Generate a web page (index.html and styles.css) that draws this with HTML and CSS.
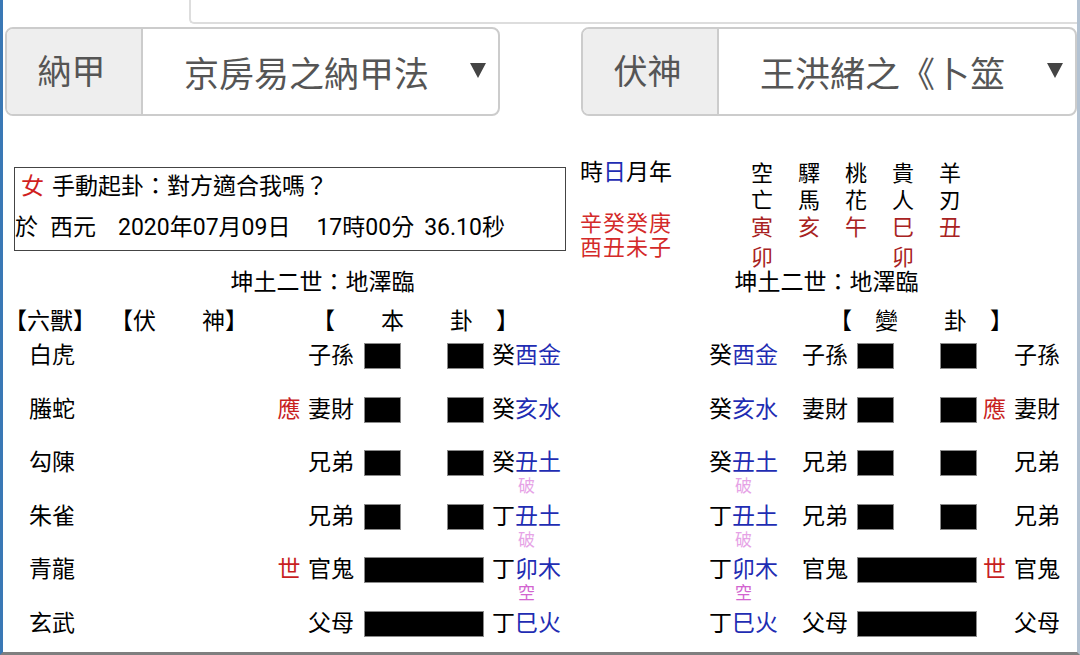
FILE: index.html
```html
<!DOCTYPE html>
<html lang="zh-Hant">
<head>
  <meta charset="UTF-8" />
  <meta name="viewport" content="width=device-width, initial-scale=1.0"/>
  <title>排卦</title>
  <link rel="stylesheet" href="styles.css">
</head>
<body>
<div class="frame">

  <div class="tabs">
    <div class="tab-blank"></div>
    <div class="tab-field"></div>
  </div>

  <div class="selects">
    <div class="pick">
      <div class="pick-label">納甲</div>
      <div class="pick-value">京房易之納甲法</div>
      <div class="pick-arrow"></div>
    </div>
    <div class="pick pick-wide">
      <div class="pick-label">伏神</div>
      <div class="pick-value">王洪緒之《卜筮</div>
      <div class="pick-arrow"></div>
    </div>
  </div>

  <div class="head">
    <div class="info">
      <div class="info-line1"><span class="sex">女</span>手動起卦：對方適合我嗎？</div>
      <div class="info-line2"><span>於</span><span class="gap-a">西元</span><span class="gap-b">2020年07月09日</span><span class="gap-c">17時00分</span><span class="gap-d">36.10秒</span></div>
    </div>

    <div class="ganzhi">
      <div class="gz-title">時<span class="blue">日</span>月年</div>
      <div class="gz-red gz-gan">辛癸癸庚</div>
      <div class="gz-red">酉丑未子</div>
    </div>

    <div class="shensha">
      <div>空</div><div>驛</div><div>桃</div><div>貴</div><div>羊</div>
      <div>亡</div><div>馬</div><div>花</div><div>人</div><div>刃</div>
      <div class="dark">寅</div><div class="dark">亥</div><div class="dark">午</div><div class="dark">巳</div><div class="dark">丑</div>
      <div class="dark low">卯</div><div></div><div></div><div class="dark low">卯</div><div></div>
    </div>
  </div>

  <div class="titles">
    <div class="title-left">坤土二世：地澤臨</div>
    <div class="title-right">坤土二世：地澤臨</div>
  </div>

  <div class="gua-head">
    <span class="gh-beast">【六獸】</span>
    <span class="gh-fu">【伏　　神】</span>
    <span class="gh-ben">【　　本　　卦　】</span>
    <span class="gh-bian">【　變　　卦　】</span>
  </div>

  <div class="gua">
    <div class="yao">
      <div class="beast">白虎</div>
      <div class="mark"></div>
      <div class="rel">子孫</div>
      <div><div class="bar yin"><i></i><i></i></div></div>
      <div class="najia">癸<span class="blue">酉金</span></div>
      <div class="najia2">癸<span class="blue">酉金</span></div>
      <div class="rel2">子孫</div>
      <div><div class="bar yin"><i></i><i></i></div></div>
      <div class="mark"></div>
      <div class="rel3">子孫</div>
    </div>

    <div class="yao">
      <div class="beast">螣蛇</div>
      <div class="mark">應</div>
      <div class="rel">妻財</div>
      <div><div class="bar yin"><i></i><i></i></div></div>
      <div class="najia">癸<span class="blue">亥水</span></div>
      <div class="najia2">癸<span class="blue">亥水</span></div>
      <div class="rel2">妻財</div>
      <div><div class="bar yin"><i></i><i></i></div></div>
      <div class="mark">應</div>
      <div class="rel3">妻財</div>
    </div>

    <div class="yao">
      <div class="beast">勾陳</div>
      <div class="mark"></div>
      <div class="rel">兄弟</div>
      <div><div class="bar yin"><i></i><i></i></div></div>
      <div class="najia">
        <div>癸<span class="blue">丑土</span></div>
        <div class="note po">破</div>
      </div>
      <div class="najia2">
        <div>癸<span class="blue">丑土</span></div>
        <div class="note po">破</div>
      </div>
      <div class="rel2">兄弟</div>
      <div><div class="bar yin"><i></i><i></i></div></div>
      <div class="mark"></div>
      <div class="rel3">兄弟</div>
    </div>

    <div class="yao">
      <div class="beast">朱雀</div>
      <div class="mark"></div>
      <div class="rel">兄弟</div>
      <div><div class="bar yin"><i></i><i></i></div></div>
      <div class="najia">
        <div>丁<span class="blue">丑土</span></div>
        <div class="note po">破</div>
      </div>
      <div class="najia2">
        <div>丁<span class="blue">丑土</span></div>
        <div class="note po">破</div>
      </div>
      <div class="rel2">兄弟</div>
      <div><div class="bar yin"><i></i><i></i></div></div>
      <div class="mark"></div>
      <div class="rel3">兄弟</div>
    </div>

    <div class="yao">
      <div class="beast">青龍</div>
      <div class="mark">世</div>
      <div class="rel">官鬼</div>
      <div><div class="bar yang"><i></i></div></div>
      <div class="najia">
        <div>丁<span class="blue">卯木</span></div>
        <div class="note kong">空</div>
      </div>
      <div class="najia2">
        <div>丁<span class="blue">卯木</span></div>
        <div class="note kong">空</div>
      </div>
      <div class="rel2">官鬼</div>
      <div><div class="bar yang"><i></i></div></div>
      <div class="mark">世</div>
      <div class="rel3">官鬼</div>
    </div>

    <div class="yao">
      <div class="beast">玄武</div>
      <div class="mark"></div>
      <div class="rel">父母</div>
      <div><div class="bar yang"><i></i></div></div>
      <div class="najia">丁<span class="blue">巳火</span></div>
      <div class="najia2">丁<span class="blue">巳火</span></div>
      <div class="rel2">父母</div>
      <div><div class="bar yang"><i></i></div></div>
      <div class="mark"></div>
      <div class="rel3">父母</div>
    </div>
  </div>

</div>
</body>
</html>
```

FILE: styles.css
```css
* {
  box-sizing: border-box;
}

html, body {
  margin: 0;
}

body {
  width: 1080px;
  height: 655px;
  overflow: hidden;
  background: #fff;
  color: #000;
  font-family: Roboto, "Noto Sans CJK TC", sans-serif;
}

.frame {
  height: 655px;
  border-left: 3px solid #3a78b5;
  border-right: 3px solid #b3c2d2;
  border-bottom: 3px solid #7f7f7f;
  overflow: hidden;
}

/* top strip */
.tabs {
  display: flex;
  height: 24px;
}

.tab-blank {
  width: 186px;
}

.tab-field {
  flex: 1;
  border-left: 2px solid #ddd;
  border-bottom: 2px solid #ddd;
  border-bottom-left-radius: 5px;
}

/* selects */
.selects {
  display: flex;
  justify-content: space-between;
  margin-top: 3px;
  padding-left: 2px;
}

.pick {
  display: flex;
  align-items: center;
  width: 495px;
  height: 89px;
  border: 2px solid #ccc;
  border-radius: 8px;
  overflow: hidden;
}

.pick-wide {
  width: 496px;
}

.pick-label {
  align-self: stretch;
  display: flex;
  align-items: center;
  justify-content: center;
  width: 136px;
  padding: 0 5px 4px 0;
  background: #eee;
  border-right: 2px solid #ccc;
  color: #555;
  font-size: 34px;
}

.pick-value {
  padding: 9px 0 0 41px;
  color: #555;
  font-size: 35px;
  line-height: 40px;
}

.pick-arrow {
  margin: 0 12px 2px auto;
  width: 0;
  height: 0;
  border-left: 8px solid transparent;
  border-right: 8px solid transparent;
  border-top: 15px solid #444;
}

/* question + stems */
.head {
  display: flex;
  align-items: flex-start;
  margin-top: 44px;
}

.info {
  width: 552px;
  margin: 7px 0 0 11px;
  border: 1px solid #444;
  font-size: 23px;
}

.info-line1 {
  padding-left: 6px;
  line-height: 37px;
}

.sex {
  margin-right: 8px;
  color: #d01f1f;
}

.info-line2 {
  line-height: 45px;
}

.gap-a { margin-left: 12px; }
.gap-b { margin-left: 22px; }
.gap-c { margin-left: 26px; }
.gap-d { margin-left: 10px; }

.ganzhi {
  margin-left: 14px;
  font-size: 23px;
}

.gz-title {
  line-height: 26px;
}

.gz-red {
  height: 24px;
  color: #d42a2a;
  font-size: 22px;
  line-height: 24px;
  letter-spacing: 1px;
}

.gz-gan {
  margin-top: 26px;
}

.shensha {
  display: grid;
  grid-template-columns: repeat(5, 47px);
  grid-template-rows: 27px 27px 27px 30px;
  margin-left: 79px;
  font-size: 22px;
  line-height: 27px;
}

.shensha .dark {
  color: #a82222;
}

.shensha .low {
  padding-top: 3px;
}

.titles {
  display: flex;
  font-size: 23px;
  line-height: 24px;
}

.title-left {
  width: 639px;
  text-align: center;
}

.title-right {
  width: 369px;
  text-align: center;
}

/* hexagram table */
.gua-head {
  display: flex;
  padding: 14.5px 0 7.5px 1px;
  font-size: 23px;
  line-height: 24px;
  white-space: pre;
}

.gh-fu { margin-left: 14px; }
.gh-ben { margin-left: 64px; }
.gh-bian { margin-left: 310px; }

.yao {
  display: grid;
  grid-template-columns: 273px 26px 60px 128px 218px 92px 55px 127px 25px 1fr;
  align-items: start;
  height: 53.6px;
  font-size: 23px;
  line-height: 30px;
}

.beast { padding-left: 26px; }
.rel { padding-left: 6px; }
.najia { padding-left: 2px; }
.najia2 { padding-left: 1px; }
.rel2 { padding-left: 2px; }
.rel3 { padding-left: 7px; }

.mark {
  color: #c81f1f;
  text-align: center;
}

.bar {
  display: flex;
  justify-content: space-between;
  width: 120px;
  height: 26px;
  margin: 2px 0 0 2px;
}

.bar i {
  display: block;
  width: 37px;
  height: 26px;
  background: #000;
  border: 1px solid #8a8a8a;
}

.bar.yang i {
  width: 120px;
}

.blue {
  color: #1f2db3;
}

.note {
  width: 23px;
  margin-left: 23px;
  font-size: 17px;
  line-height: 16px;
  text-align: center;
}

.po {
  color: #e6a3e6;
}

.kong {
  color: #d264d0;
}
```
